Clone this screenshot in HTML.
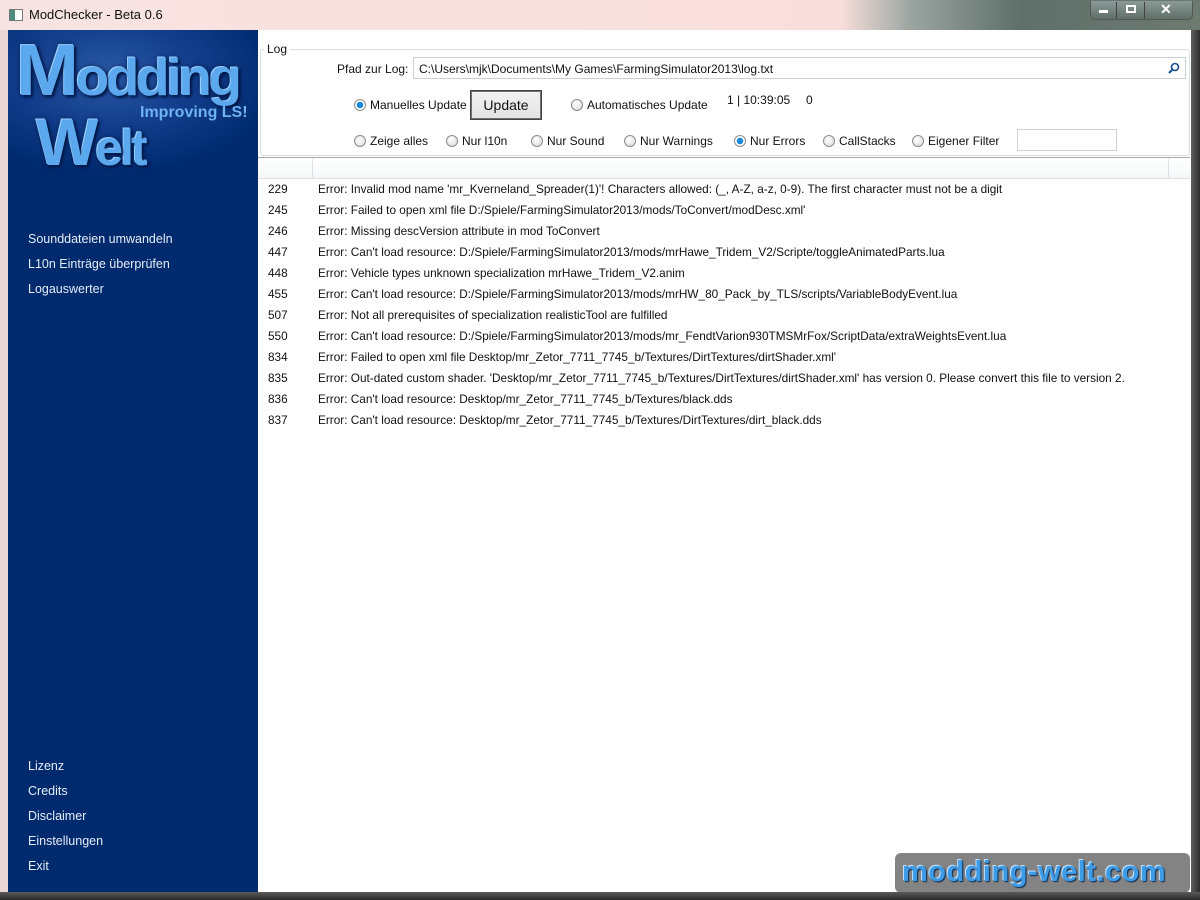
<!DOCTYPE html>
<html><head><meta charset="utf-8"><style>
*{margin:0;padding:0;box-sizing:border-box}
body{width:1200px;height:900px;overflow:hidden;position:relative;font-family:"Liberation Sans",sans-serif;font-size:12px;color:#111;background:#e9d6d4}
.a{position:absolute;white-space:nowrap}
.title{left:0;top:0;width:1200px;height:30px;background:linear-gradient(90deg,#f7e4e2 0%,#f9dfdc 70%,#9aa4a0 76%,#5f6f6a 85%,#6c7a70 100%)}
.side{left:8px;top:30px;width:250px;height:862px;background:#002a6e}
.logo{left:8px;top:30px;width:250px;height:180px;background:radial-gradient(ellipse 70% 55% at 40% 25%,#2c5aa6 0%,#123e8c 50%,#002a6e 100%)}
.main{left:258px;top:30px;width:933px;height:862px;background:#fff}
.bottom{left:0;top:892px;width:1200px;height:8px;background:linear-gradient(#5a5a5a,#2a2a2a)}
.rightb{left:1191px;top:30px;width:9px;height:870px;background:linear-gradient(90deg,#5f5f5f,#2d2d2d)}
.menu{color:#e6ecf8;font-size:12.5px}
.rb{display:inline-block;width:12px;height:12px;border-radius:50%;border:1px solid #8c8c8c;background:radial-gradient(circle at 40% 35%,#fff,#d8d8d8);vertical-align:-2px;margin-right:4px}
.rb.on{background:radial-gradient(circle,#1a8ad8 0 3px,#fff 3.5px)}
.row{left:268px;font-size:11.8px}
.row span{position:absolute;left:50px}
.lg{font-weight:bold;color:#5ba8ee;text-shadow:2px 2px 2px #001a4a,-1px -1px 0 #9cd0ff,0 0 6px #001a4a}
</style></head><body>
<div class="a title"></div>
<div class="a" style="left:9px;top:9px;width:14px;height:12px;border:1px solid #777;background:linear-gradient(90deg,#4a8a7a 40%,#fff 40%)"></div>
<div class="a" style="left:29px;top:7px;font-size:13px">ModChecker - Beta 0.6</div>
<div class="a" style="left:1090px;top:1px;width:103px;height:19px;border:1px solid #555;border-top:none;border-radius:0 0 5px 5px;background:linear-gradient(#8a9a96,#5f6e68)"></div>
<div class="a" style="left:1116px;top:2px;width:1px;height:17px;background:#444"></div>
<div class="a" style="left:1144px;top:2px;width:1px;height:17px;background:#444"></div>
<div class="a" style="left:1099px;top:10px;width:9px;height:3px;background:#fff"></div>
<div class="a" style="left:1126px;top:5px;width:10px;height:8px;border:2px solid #fff"></div>
<div class="a" style="left:1160px;top:1px;color:#fff;font-weight:bold;font-size:14px">✕</div>
<div class="a side"></div>
<div class="a logo"></div>
<div class="a lg" style="left:16px;top:30px;font-size:72px;letter-spacing:-3px;transform:scaleX(1.05);transform-origin:left">M<span style="font-size:52px">odding</span></div>
<div class="a" style="left:140px;top:104px;font-size:16px;color:#6fb2f0;font-weight:bold">Improving LS!</div>
<div class="a lg" style="left:36px;top:104px;font-size:66px;letter-spacing:-3px">W<span style="font-size:50px">elt</span></div>
<div class="a menu" style="left:28px;top:232px">Sounddateien umwandeln</div>
<div class="a menu" style="left:28px;top:257px">L10n Einträge überprüfen</div>
<div class="a menu" style="left:28px;top:282px">Logauswerter</div>
<div class="a menu" style="left:28px;top:759px">Lizenz</div>
<div class="a menu" style="left:28px;top:784px">Credits</div>
<div class="a menu" style="left:28px;top:809px">Disclaimer</div>
<div class="a menu" style="left:28px;top:834px">Einstellungen</div>
<div class="a menu" style="left:28px;top:859px">Exit</div>
<div class="a main"></div>
<div class="a" style="left:260px;top:49px;width:930px;height:107px;border:1px solid #d5dfe5;border-radius:3px"></div>
<div class="a" style="left:264px;top:42px;background:#fff;padding:0 3px">Log</div>
<div class="a" style="left:337px;top:62px">Pfad zur Log:</div>
<div class="a" style="left:413px;top:57px;width:773px;height:22px;border:1px solid #c9d0d6;padding:4px 5px">C:\Users\mjk\Documents\My Games\FarmingSimulator2013\log.txt</div>
<svg class="a" style="left:1167px;top:62px" width="14" height="14"><circle cx="8" cy="5" r="3.5" fill="none" stroke="#1a4f9a" stroke-width="1.6"/><line x1="5.5" y1="7.5" x2="2" y2="11" stroke="#1a4f9a" stroke-width="2"/></svg>
<div class="a" style="left:354px;top:98px"><i class="rb on"></i>Manuelles Update</div>
<div class="a" style="left:471px;top:91px;width:70px;height:28px;border:1px solid #707070;outline:1px solid #444;background:linear-gradient(#f3f3f3,#e2e2e2);font-size:14px;text-align:center;line-height:26px">Update</div>
<div class="a" style="left:571px;top:98px"><i class="rb"></i>Automatisches Update</div>
<div class="a" style="left:727px;top:93px">1 | 10:39:05</div>
<div class="a" style="left:806px;top:93px">0</div>
<div class="a" style="left:354px;top:134px"><i class="rb"></i>Zeige alles</div>
<div class="a" style="left:446px;top:134px"><i class="rb"></i>Nur l10n</div>
<div class="a" style="left:531px;top:134px"><i class="rb"></i>Nur Sound</div>
<div class="a" style="left:624px;top:134px"><i class="rb"></i>Nur Warnings</div>
<div class="a" style="left:734px;top:134px"><i class="rb on"></i>Nur Errors</div>
<div class="a" style="left:823px;top:134px"><i class="rb"></i>CallStacks</div>
<div class="a" style="left:912px;top:134px"><i class="rb"></i>Eigener Filter</div>
<div class="a" style="left:1017px;top:129px;width:100px;height:22px;border:1px solid #d0d0d0"></div>
<div class="a" style="left:258px;top:157px;width:932px;height:22px;border-top:1px solid #aaa;border-bottom:1px solid #e0e0e0;background:linear-gradient(#fff,#f6f7f8)"></div>
<div class="a" style="left:312px;top:159px;width:1px;height:19px;background:#e0e0e0"></div>
<div class="a" style="left:1168px;top:159px;width:1px;height:19px;background:#e0e0e0"></div>
<div class="a row" style="top:182px">229<span>Error: Invalid mod name 'mr_Kverneland_Spreader(1)'! Characters allowed: (_, A-Z, a-z, 0-9). The first character must not be a digit</span></div>
<div class="a row" style="top:203px">245<span>Error: Failed to open xml file D:/Spiele/FarmingSimulator2013/mods/ToConvert/modDesc.xml'</span></div>
<div class="a row" style="top:224px">246<span>Error: Missing descVersion attribute in mod ToConvert</span></div>
<div class="a row" style="top:245px">447<span>Error: Can't load resource: D:/Spiele/FarmingSimulator2013/mods/mrHawe_Tridem_V2/Scripte/toggleAnimatedParts.lua</span></div>
<div class="a row" style="top:266px">448<span>Error: Vehicle types unknown specialization mrHawe_Tridem_V2.anim</span></div>
<div class="a row" style="top:287px">455<span>Error: Can't load resource: D:/Spiele/FarmingSimulator2013/mods/mrHW_80_Pack_by_TLS/scripts/VariableBodyEvent.lua</span></div>
<div class="a row" style="top:308px">507<span>Error: Not all prerequisites of specialization realisticTool are fulfilled</span></div>
<div class="a row" style="top:329px">550<span>Error: Can't load resource: D:/Spiele/FarmingSimulator2013/mods/mr_FendtVarion930TMSMrFox/ScriptData/extraWeightsEvent.lua</span></div>
<div class="a row" style="top:350px">834<span>Error: Failed to open xml file Desktop/mr_Zetor_7711_7745_b/Textures/DirtTextures/dirtShader.xml'</span></div>
<div class="a row" style="top:371px">835<span>Error: Out-dated custom shader. 'Desktop/mr_Zetor_7711_7745_b/Textures/DirtTextures/dirtShader.xml' has version 0. Please convert this file to version 2.</span></div>
<div class="a row" style="top:392px">836<span>Error: Can't load resource: Desktop/mr_Zetor_7711_7745_b/Textures/black.dds</span></div>
<div class="a row" style="top:413px">837<span>Error: Can't load resource: Desktop/mr_Zetor_7711_7745_b/Textures/DirtTextures/dirt_black.dds</span></div>
<div class="a rightb"></div>
<div class="a bottom"></div>
<div class="a" style="left:895px;top:853px;width:295px;height:40px;background:rgba(90,90,90,.75);border-radius:6px"></div>
<div class="a" style="left:902px;top:856px;font-size:29px;font-weight:bold;color:#3e9be6;letter-spacing:0.5px;text-shadow:1px 1px 1px #0a2a50,-1px -1px 0 #bfe0ff">modding-welt.com</div>
</body></html>
